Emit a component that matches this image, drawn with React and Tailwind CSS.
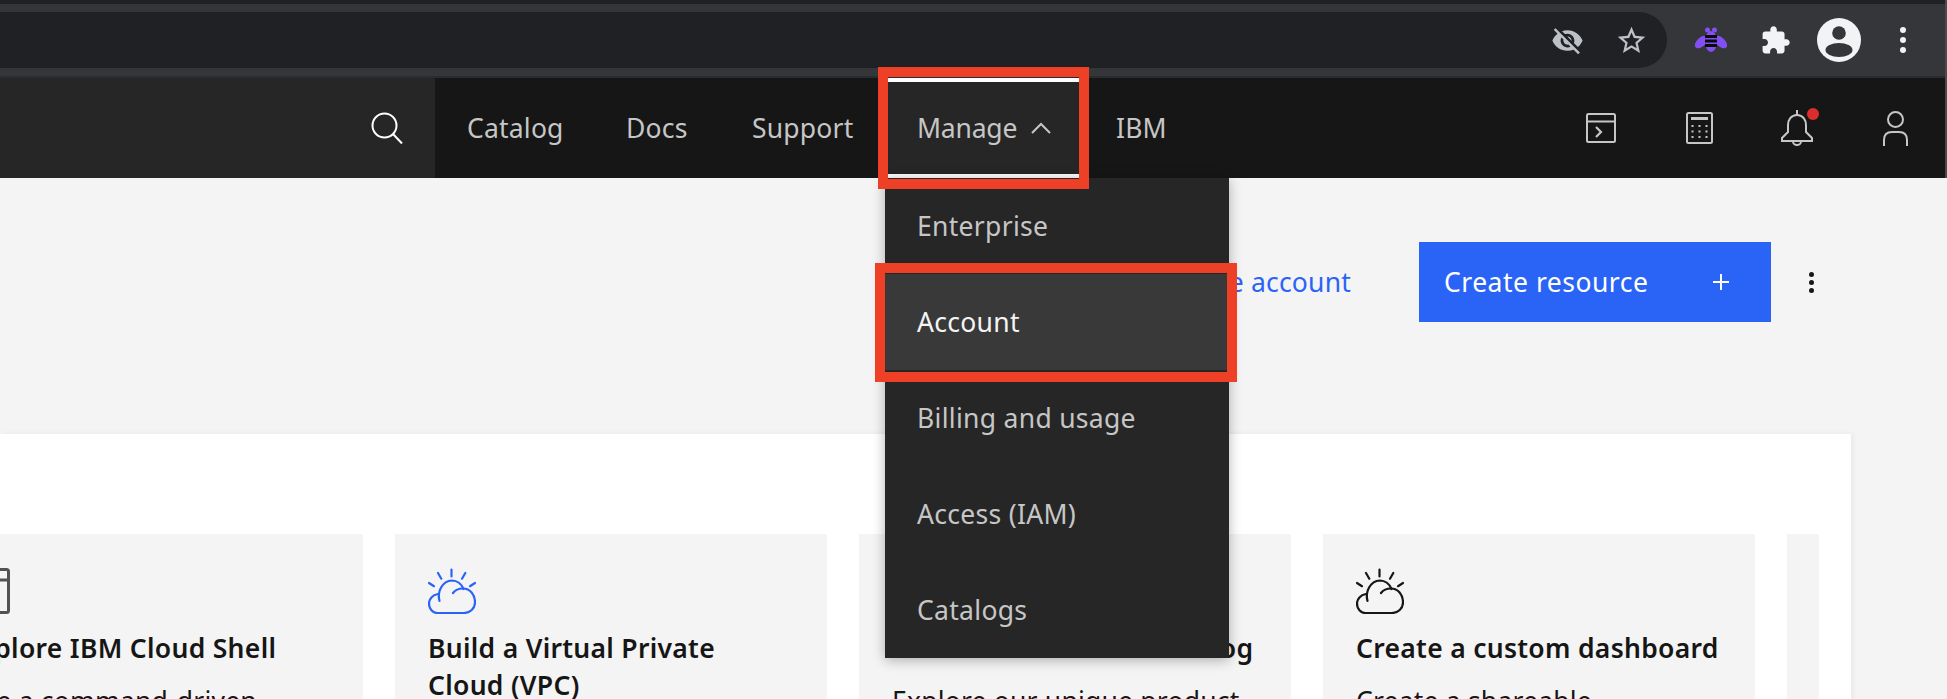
import React from "react";

const NAV = [
  { label: "Catalog", width: "w-[159px]" },
  { label: "Docs", width: "w-[126px]" },
  { label: "Support", width: "w-[165px]" },
];

const MENU = ["Enterprise", "Account", "Billing and usage", "Access (IAM)", "Catalogs"];

const CloudIcon = ({ className }) => (
  <svg viewBox="0 0 48 46" className={`w-[48px] h-[46px] ${className}`} fill="none" stroke="currentColor" strokeWidth="2.2" strokeLinecap="round">
    <path d="M23.5 1.5v7M10 5l3.3 5.7M37.3 5L34 10.7M1 15l5 3.2M47 15l-5 3.2" />
    <path d="M11.5 33C9 24 14 13 24 12.5c5 0 9.500 3.500 11.500 8.500" />
    <path d="M25 25c3-4 7-4.500 10-4.500 7 0 12 6 12 14 0 6-5 10.500-11 10.500H10C4.500 45.500 1 40.500 1 35.500c0-4.500 3.500-8.500 9-9.500" />
  </svg>
);

const ShellIcon = () => (
  <svg viewBox="0 0 46 46" className="w-[46px] h-[46px] text-[#525252]" fill="none" stroke="currentColor" strokeWidth="3">
    <rect x="1.500" y="1.500" width="43" height="43" rx="2" />
    <path d="M1.500 12h43" />
  </svg>
);

const TerminalIcon = () => (
  <svg viewBox="0 0 30 30" className="w-[30px] h-[30px]" fill="none" stroke="currentColor" strokeWidth="2">
    <rect x="1" y="1" width="28" height="28" rx="1.500" />
    <path d="M1 8.500h28" />
    <path d="M10 14l5 5-5 5" strokeWidth="2.200" />
  </svg>
);

const CalculatorIcon = () => (
  <svg viewBox="0 0 27 32" className="w-[27px] h-[32px]" fill="none" stroke="currentColor" strokeWidth="2">
    <rect x="1" y="1" width="25" height="30" rx="1.500" />
    <path d="M5 6.500h17" strokeWidth="3" />
    <path d="M5.500 14h2M12.500 14h2M19.500 14h2M5.500 19.500h2M12.500 19.500h2M19.500 19.500h2M5.500 25h2M12.500 25h2M19.500 25h2" strokeWidth="2" />
  </svg>
);

const BellIcon = () => (
  <svg viewBox="0 0 32 36" className="w-[32px] h-[36px]" fill="none" stroke="currentColor" strokeWidth="2">
    <path d="M16 0v5" />
    <path d="M16 5C10 5 7 10 7 15v7l-6 6v3h30v-3l-6-6v-7c0-5-3-10-9-10z" />
    <path d="M12 31.500a4 3.500 0 0 0 8 0" />
  </svg>
);

const UserIcon = () => (
  <svg viewBox="0 0 25 35" className="w-[25px] h-[35px]" fill="none" stroke="currentColor" strokeWidth="2">
    <circle cx="12.500" cy="8.500" r="7.500" />
    <path d="M1 35v-6c0-5 3-8 8-8h7c5 0 8 3 8 8v6" />
  </svg>
);

const BeeIcon = () => (
  <svg viewBox="0 0 32 26" className="w-[32px] h-[26px]">
    <circle cx="12.500" cy="3" r="2.500" fill="#8250f2" />
    <circle cx="19.500" cy="3" r="2.500" fill="#8250f2" />
    <ellipse cx="6.500" cy="15" rx="4.500" ry="8" transform="rotate(48 6.500 15)" fill="#8250f2" />
    <ellipse cx="25.500" cy="15" rx="4.500" ry="8" transform="rotate(-48 25.500 15)" fill="#8250f2" />
    <ellipse cx="16" cy="14.500" rx="6" ry="10.500" fill="#8250f2" />
    <path d="M10 8h12v3H10zM10 12.500h12v3H10zM10 17h12v3H10z" fill="#0b0b0b" />
  </svg>
);

const PuzzleIcon = () => (
  <svg viewBox="0 0 24 24" className="w-[31px] h-[31px]" fill="#f1f3f4">
    <path d="M20.500 11H19V7c0-1.100-.9-2-2-2h-4V3.500C13 2.120 11.880 1 10.500 1S8 2.120 8 3.500V5H4c-1.100 0-1.990.9-1.990 2v3.800H3.500c1.490 0 2.700 1.210 2.700 2.700s-1.210 2.700-2.700 2.700H2V20c0 1.100.9 2 2 2h3.800v-1.500c0-1.490 1.210-2.700 2.700-2.700 1.490 0 2.700 1.210 2.700 2.700V22H17c1.100 0 2-.9 2-2v-4h1.500c1.380 0 2.500-1.120 2.500-2.500S21.880 11 20.500 11z" />
  </svg>
);

const AvatarIcon = () => (
  <svg viewBox="0 0 44 44" className="w-[44px] h-[44px]">
    <circle cx="22" cy="22" r="22" fill="#f1f3f4" />
    <circle cx="22" cy="15" r="6.800" fill="#35363a" />
    <ellipse cx="22" cy="32" rx="13.500" ry="7" fill="#35363a" />
  </svg>
);

const Card = ({ icon, title, text, className = "" }) => (
  <div className={`w-[432px] h-[300px] shrink-0 bg-[#f4f4f4] pl-[33px] pt-[34px] ${className}`}>
    <div className="h-[46px] mb-[16px]">{icon}</div>
    <h3 className="text-[26.5px] leading-[37px] tracking-[0.3px] whitespace-nowrap font-semibold text-[#161616] mb-[16px]">{title}</h3>
    <p className="text-[26.5px] leading-[37px] tracking-[0.2px] text-[#161616]">{text}</p>
  </div>
);

export default function App() {
  return (
    <div className="relative w-[1947px] h-[699px] overflow-hidden bg-[#f4f4f4] font-['Noto_Sans',sans-serif]">
      {/* Browser chrome */}
      <div className="h-[78px] bg-[#35363a] border-r-2 border-[#4a4a4a]">
        <div className="h-1 bg-[#202124]" />
        <div className="h-[72px] flex items-start pt-2">
          <div className="w-[1667px] h-14 rounded-r-[28px] bg-[#202124] flex items-center justify-end gap-[31px] pr-[19px] text-[#bdc1c6]">
            <svg viewBox="0 0 24 24" className="w-[33px] h-[33px]" fill="currentColor">
              <path d="M12 7c2.760 0 5 2.240 5 5 0 .65-.13 1.260-.36 1.830l2.920 2.920c1.510-1.260 2.700-2.890 3.430-4.750-1.730-4.390-6-7.500-11-7.500-1.400 0-2.740.25-3.980.7l2.160 2.160C10.740 7.130 11.350 7 12 7zM2 4.270l2.280 2.280.46.46C3.080 8.300 1.780 10.020 1 12c1.730 4.390 6 7.500 11 7.500 1.550 0 3.030-.3 4.380-.84l.42.42L19.730 22 21 20.730 3.270 3 2 4.270zM7.530 9.800l1.550 1.550c-.05.21-.08.43-.08.65 0 1.660 1.340 3 3 3 .22 0 .44-.03.65-.08l1.550 1.550c-.67.33-1.410.53-2.200.53-2.760 0-5-2.240-5-5 0-.79.2-1.530.53-2.200zm4.310-.78l3.150 3.150.02-.16c0-1.660-1.340-3-3-3l-.17.01z" />
            </svg>
            <svg viewBox="0 0 24 24" className="w-[33px] h-[33px]" fill="currentColor">
              <path d="M22 9.240l-7.190-.62L12 2 9.190 8.630 2 9.240l5.460 4.730L5.820 21 12 17.270 18.180 21l-1.630-7.030L22 9.240zM12 15.400l-3.760 2.270 1-4.280-3.320-2.880 4.380-.38L12 6.100l1.710 4.040 4.380.38-3.320 2.880 1 4.280L12 15.400z" />
            </svg>
          </div>
          <div className="ml-3 flex items-center h-14">
            <div className="w-16 flex justify-center"><BeeIcon /></div>
            <div className="w-16 flex justify-center"><PuzzleIcon /></div>
            <div className="w-16 flex justify-center"><AvatarIcon /></div>
            <div className="w-16 flex flex-col items-center gap-1">
              <span className="w-1.5 h-1.5 rounded-full bg-[#f1f3f4]" />
              <span className="w-1.5 h-1.5 rounded-full bg-[#f1f3f4]" />
              <span className="w-1.5 h-1.5 rounded-full bg-[#f1f3f4]" />
            </div>
          </div>
        </div>
        <div className="h-0.5 bg-[#2b2c30]" />
      </div>

      {/* Console header */}
      <header className="h-[100px] flex bg-[#161616] border-r-2 border-[#4a4a4a] text-[26.5px] tracking-[0.2px] text-[#c6c6c6]">
        <div className="w-[435px] bg-[#262626] flex items-center justify-end pr-[32px]">
          <svg viewBox="0 0 32 32" className="w-[32px] h-[32px] text-white" fill="none" stroke="currentColor" strokeWidth="2">
            <circle cx="13.500" cy="13.500" r="12" />
            <path d="M22 22l9 9.500" />
          </svg>
        </div>
        {NAV.map((item) => (
          <div key={item.label} className={`${item.width} flex items-center pl-[32px] pt-[2px]`}>
            {item.label}
          </div>
        ))}
        <div className="w-[198px] flex items-center pl-[32px] bg-[#262626] border-y-4 border-white">
          <span className="w-[114px] pt-[2px] tracking-[-0.2px]">Manage</span>
          <svg viewBox="0 0 20 12" className="w-[20px] h-[12px]" fill="none" stroke="currentColor" strokeWidth="2">
            <path d="M1 11l9-9 9 9" />
          </svg>
        </div>
        <div className="flex items-center pl-[33px] pt-[2px]">IBM</div>
        <div className="ml-auto w-[393px] flex items-center">
          <div className="w-[98px] flex justify-center"><TerminalIcon /></div>
          <div className="w-[98px] flex justify-center"><CalculatorIcon /></div>
          <div className="relative w-[98px] flex justify-center">
            <BellIcon />
            <span className="absolute left-[59px] top-[-2px] w-3 h-3 rounded-full bg-[#da2f2a]" />
          </div>
          <div className="w-[98px] flex justify-center"><UserIcon /></div>
        </div>
      </header>

      {/* Page toolbar */}
      <div className="h-[256px] pt-16 pr-[96px] flex justify-end items-start">
        <a className="h-20 flex items-center pt-[2px] text-[26.5px] tracking-[0.2px] text-[#2a64f6] mr-[68px]">Upgrade account</a>
        <button className="w-[352px] h-20 bg-[#2a64f6] text-white text-[26.5px] tracking-[0.5px] flex items-center justify-between pl-[25px] pr-[42px]">
          <span className="pt-[2px]">Create resource</span>
          <svg viewBox="0 0 16 16" className="w-4 h-4" fill="none" stroke="currentColor" strokeWidth="2">
            <path d="M8 0v16M0 8h16" />
          </svg>
        </button>
        <div className="w-20 h-20 flex flex-col items-center justify-center gap-[3px]">
          <span className="w-[5px] h-[5px] rounded-full bg-[#161616]" />
          <span className="w-[5px] h-[5px] rounded-full bg-[#161616]" />
          <span className="w-[5px] h-[5px] rounded-full bg-[#161616]" />
        </div>
      </div>

      {/* Getting started panel */}
      <div className="w-[1851px] h-[400px] bg-white shadow-[2px_0_6px_rgba(0,0,0,0.05)] pt-[100px] pr-8">
        <div className="flex gap-8 overflow-hidden">
          <Card className="ml-[-69px]" icon={<ShellIcon />} title="Explore IBM Cloud Shell" text="Use a command-driven" />
          <Card
            icon={<CloudIcon className="text-[#2a64f6]" />}
            title={<>Build a Virtual Private<br />Cloud (VPC)</>}
            text="Deploy a private network"
          />
          <Card icon={<CloudIcon className="text-[#161616]" />} title="View the IBM Cloud catalog" text="Explore our unique product" />
          <Card icon={<CloudIcon className="text-[#161616]" />} title="Create a custom dashboard" text="Create a shareable" />
          <Card icon={null} title="" text="" />
        </div>
      </div>

      {/* Manage dropdown */}
      <div className="absolute left-[885px] top-[178px] w-[344px] bg-[#262626] shadow-[0_2px_12px_rgba(0,0,0,0.3)] text-[26.5px] tracking-[0.3px] text-[#c6c6c6]">
        {MENU.map((item) => (
          <div
            key={item}
            className={`h-[96px] flex items-center pl-[32px] pt-[2px] ${item === "Account" ? "bg-[#393939] text-[#f4f4f4]" : ""}`}
          >
            {item}
          </div>
        ))}
      </div>

      {/* Annotation boxes */}
      <div className="absolute left-[878px] top-[67px] w-[211px] h-[122px] border-[10px] border-[#ee4026] pointer-events-none" />
      <div className="absolute left-[875px] top-[263px] w-[362px] h-[119px] border-[10px] border-[#ee4026] pointer-events-none" />
    </div>
  );
}
